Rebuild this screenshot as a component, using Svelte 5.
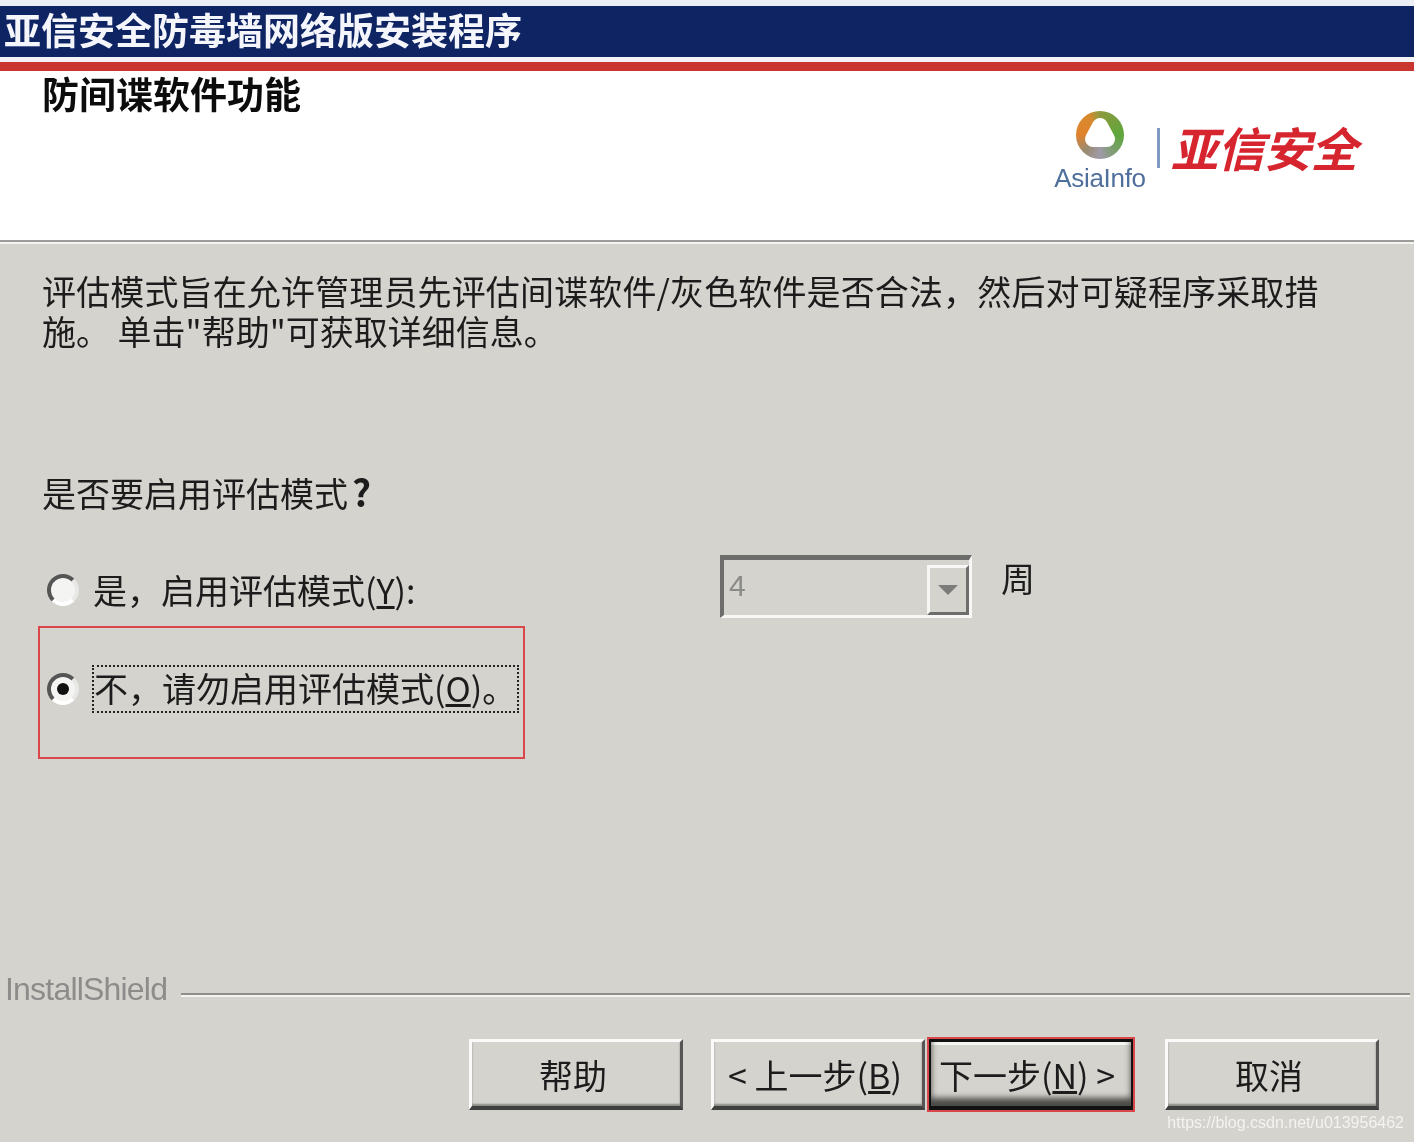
<script>
  let evalMode = $state('no');
</script>

<div class="dialog">
  <div class="titlebar">亚信安全防毒墙网络版安装程序</div>
  <div class="redline"></div>

  <header class="banner">
    <h1>防间谍软件功能</h1>
    <div class="logo">
      <div class="mark">
        <div class="ring">
          <svg width="48" height="48" viewBox="0 0 48 48">
            <path d="M24 15 L17 28 L31 28 Z" fill="#fff" stroke="#fff" stroke-width="16" stroke-linejoin="round" />
          </svg>
        </div>
        <span class="mark-name">AsiaInfo</span>
      </div>
      <i class="logo-bar"></i>
      <span class="logo-cn">亚信安全</span>
    </div>
  </header>

  <main class="content">
    <p class="desc"><span class="line-one">评估模式旨在允许管理员先评估间谍软件/灰色软件是否合法，然后对可疑程序采取措</span><br />施。 单击"帮助"可获取详细信息。</p>
    <p class="question">是否要启用评估模式<b>?</b></p>

    <div class="row-yes">
      <label class="radio-line">
        <input type="radio" bind:group={evalMode} value="yes" />
        <span class="radio"></span>
        <span class="label">是，启用评估模式(<u>Y</u>):</span>
      </label>
      <div class="combo">
        <span class="combo-val">4</span>
        <span class="combo-btn"><i></i></span>
      </div>
      <span class="weeks">周</span>
    </div>

    <div class="redbox">
      <label class="radio-line">
        <input type="radio" bind:group={evalMode} value="no" />
        <span class="radio"></span>
        <span class="label focus">不，请勿启用评估模式(<u>O</u>)。</span>
      </label>
    </div>
  </main>

  <div class="shield">
    <span>InstallShield</span>
    <i></i>
  </div>

  <footer class="buttons">
    <button class="btn help">帮助</button>
    <button class="btn back">&lt; 上一步(<u>B</u>)</button>
    <button class="btn next">下一步(<u>N</u>) &gt;</button>
    <button class="btn cancel">取消</button>
  </footer>
  <div class="watermark">https://blog.csdn.net/u013956462</div>
</div>

<style>
  :global(body) {
    margin: 0;
    background: #d5d3ce;
  }

  .dialog {
    width: 1414px;
    height: 1142px;
    overflow: hidden;
    position: relative;
    display: flex;
    flex-direction: column;
    background: #d5d3ce;
    color: #1c1c1c;
    font-family: "Noto Sans CJK SC", "Liberation Sans", sans-serif;
    font-size: 34px;
    filter: blur(0.5px);
  }

  /* barra de titulo */
  .titlebar {
    height: 51px;
    line-height: 46px;
    padding-left: 4px;
    border-top: 6px solid #eceef5;
    border-bottom: 5px solid #f3f2f5;
    background: #0e2463;
    color: #f4f6fb;
    font-size: 37px;
    font-weight: 700;
    white-space: nowrap;
  }

  .redline {
    height: 9px;
    background: #c8362f;
  }

  .banner {
    height: 169px;
    background: #fff;
    display: flex;
    justify-content: space-between;
    border-bottom: 2px solid #9c9c98;
    box-shadow: 0 2px 0 #f2f2f0;
  }

  .banner h1 {
    margin: 0 0 0 42px;
    font-size: 37px;
    line-height: 44px;
    font-weight: 700;
    color: #0c0c0c;
  }

  .logo {
    display: flex;
    align-items: flex-start;
    padding: 40px 57px 0 0;
  }

  .mark {
    width: 96px;
    display: flex;
    flex-direction: column;
    align-items: center;
  }

  .ring {
    width: 48px;
    height: 48px;
    border-radius: 50%;
    background: conic-gradient(#8d9a3f 0deg, #5ea63b 90deg, #7a9e6a 135deg, #a09aa8 180deg, #9a8a70 225deg, #e0822c 270deg, #d88a30 330deg, #8d9a3f 360deg);
  }

  .ring svg {
    display: block;
  }

  .mark-name {
    margin-top: 5px;
    font-family: "Liberation Sans", sans-serif;
    font-size: 26px;
    line-height: 28px;
    letter-spacing: -0.3px;
    color: #4f6f9c;
  }

  .logo-bar {
    width: 3px;
    height: 40px;
    margin: 17px 0 0 9px;
    background: #7f9ac2;
  }

  .logo-cn {
    margin: 6px 0 0 11px;
    font-size: 47px;
    line-height: 60px;
    font-weight: 700;
    font-style: italic;
    letter-spacing: -0.5px;
    color: #d6252e;
  }

  /* cuerpo */
  .content {
    flex: 1;
    padding: 29px 0 0 42px;
  }

  .desc {
    margin: 0;
    line-height: 40px;
    white-space: nowrap;
  }

  .line-one {
    letter-spacing: 0.14px;
  }

  .question {
    margin: 120px 0 0;
    line-height: 40px;
  }

  .question b {
    margin-left: 4px;
    font-size: 37px;
  }

  .row-yes {
    display: flex;
    align-items: flex-start;
    margin-top: 41px;
    height: 72px;
  }

  .radio-line {
    display: flex;
    align-items: center;
    position: relative;
  }

  .radio-line input {
    position: absolute;
    opacity: 0;
    margin: 0;
  }

  .radio {
    width: 32px;
    height: 32px;
    margin: 0 14px 0 5px;
    box-sizing: border-box;
    border-radius: 50%;
    flex: none;
    background: #f4f4f2;
    border: 4px solid;
    border-color: #555 #e8e8e6 #fff #555;
    display: flex;
    align-items: center;
    justify-content: center;
  }

  input:checked + .radio::after {
    content: "";
    width: 12px;
    height: 12px;
    border-radius: 50%;
    background: #111;
  }

  .row-yes .radio-line {
    width: 678px;
    margin-top: 16px;
    height: 40px;
  }

  .label {
    line-height: 40px;
    white-space: nowrap;
  }

  .combo {
    width: 252px;
    height: 63px;
    box-sizing: border-box;
    margin-top: 1px;
    border-style: solid;
    border-width: 5px 3px 3px 4px;
    border-color: #6d6d6b #f7f7f5 #f7f7f5 #6d6d6b;
    display: flex;
    justify-content: space-between;
  }

  .combo-val {
    padding: 0 0 4px 5px;
    align-self: center;
    font-family: "Liberation Sans", sans-serif;
    font-size: 30px;
    color: #8a8a88;
  }

  .combo-btn {
    width: 42px;
    height: 50px;
    box-sizing: border-box;
    align-self: flex-end;
    border-style: solid;
    border-width: 3px;
    border-color: #f7f7f5 #6d6d6b #6d6d6b #f7f7f5;
    display: flex;
    align-items: center;
    justify-content: center;
  }

  .combo-btn i {
    border: 10px solid transparent;
    border-top: 10px solid #7c7c7a;
    border-bottom: 0;
  }

  .weeks {
    margin: 4px 0 0 29px;
    line-height: 40px;
  }

  .redbox {
    width: 487px;
    height: 133px;
    box-sizing: border-box;
    margin: 0 0 0 -4px;
    border: 2px solid #d9474a;
    padding: 37px 4px 0 4px;
  }

  .redbox .radio {
    margin-left: 3px;
    margin-right: 13px;
  }

  .focus {
    width: 428px;
    height: 48px;
    line-height: 42px;
    box-sizing: border-box;
    border: 2px dotted #222;
    white-space: nowrap;
  }

  /* pie */
  .shield {
    display: flex;
    align-items: center;
    padding: 0 4px 0 5px;
    height: 34px;
    color: #8c8c8a;
    font-family: "Liberation Sans", sans-serif;
    font-size: 32px;
  }

  .shield span {
    width: 176px;
    letter-spacing: -0.8px;
    white-space: nowrap;
  }

  .shield i {
    flex: 1;
    height: 2px;
    margin-top: 10px;
    background: #8e8e8a;
    box-shadow: 0 2px 0 #f4f4f2;
  }

  .buttons {
    display: flex;
    padding: 33px 0 32px 469px;
  }

  .btn {
    width: 214px;
    height: 71px;
    box-sizing: border-box;
    padding: 0 6px 0 0;
    background: #d5d3ce;
    color: #1c1c1c;
    font: inherit;
    white-space: nowrap;
    border-style: solid;
    border-width: 3px 3px 4px 3px;
    border-color: #fafaf8 #555 #3f3f3d #fafaf8;
    box-shadow: inset 0 -2px 2px #8a8a86;
  }

  .back {
    margin-left: 28px;
  }

  .next {
    width: 204px;
    margin-left: 4px;
    padding: 0 8px 0 0;
    outline: 2px solid #d9474a;
    border-color: #111;
    border-width: 3px 2px 4px 2px;
    box-shadow: inset 0 -8px 6px #4a4a46, inset 0 3px 0 #f4f4f2;
  }

  .cancel {
    margin-left: 32px;
  }

  .watermark {
    position: absolute;
    right: 10px;
    bottom: 10px;
    color: #f3f3f1;
    font-family: "Liberation Sans", sans-serif;
    font-size: 16px;
    line-height: 18px;
  }
</style>
